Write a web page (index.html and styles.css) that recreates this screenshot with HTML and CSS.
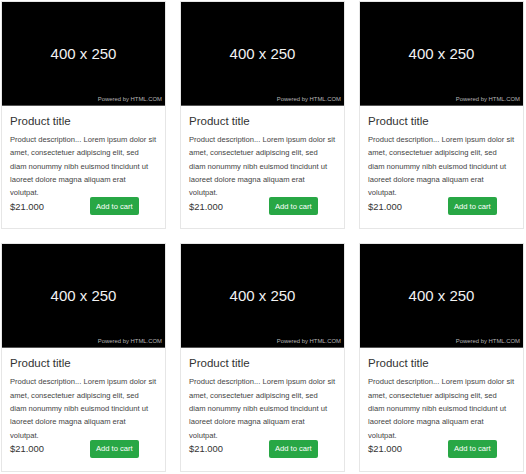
FILE: index.html
```html
<!DOCTYPE html>
<html>
<head>
<meta charset="utf-8">
<link rel="stylesheet" href="styles.css">
</head>
<body>
<div class="grid">
  <div class="card">
    <div class="thumb"><span class="size">400 x 250</span><span class="powered">Powered by HTML.COM</span></div>
    <div class="body">
      <h2 class="title">Product title</h2>
      <p class="desc">Product description... Lorem ipsum dolor sit<br>amet, consectetuer adipiscing elit, sed<br>diam nonummy nibh euismod tincidunt ut<br>laoreet dolore magna aliquam erat<br>volutpat.</p>
      <div class="foot"><span class="price">$21.000</span><button class="btn">Add to cart</button></div>
    </div>
  </div>
  <div class="card">
    <div class="thumb"><span class="size">400 x 250</span><span class="powered">Powered by HTML.COM</span></div>
    <div class="body">
      <h2 class="title">Product title</h2>
      <p class="desc">Product description... Lorem ipsum dolor sit<br>amet, consectetuer adipiscing elit, sed<br>diam nonummy nibh euismod tincidunt ut<br>laoreet dolore magna aliquam erat<br>volutpat.</p>
      <div class="foot"><span class="price">$21.000</span><button class="btn">Add to cart</button></div>
    </div>
  </div>
  <div class="card">
    <div class="thumb"><span class="size">400 x 250</span><span class="powered">Powered by HTML.COM</span></div>
    <div class="body">
      <h2 class="title">Product title</h2>
      <p class="desc">Product description... Lorem ipsum dolor sit<br>amet, consectetuer adipiscing elit, sed<br>diam nonummy nibh euismod tincidunt ut<br>laoreet dolore magna aliquam erat<br>volutpat.</p>
      <div class="foot"><span class="price">$21.000</span><button class="btn">Add to cart</button></div>
    </div>
  </div>
  <div class="card">
    <div class="thumb"><span class="size">400 x 250</span><span class="powered">Powered by HTML.COM</span></div>
    <div class="body">
      <h2 class="title">Product title</h2>
      <p class="desc">Product description... Lorem ipsum dolor sit<br>amet, consectetuer adipiscing elit, sed<br>diam nonummy nibh euismod tincidunt ut<br>laoreet dolore magna aliquam erat<br>volutpat.</p>
      <div class="foot"><span class="price">$21.000</span><button class="btn">Add to cart</button></div>
    </div>
  </div>
  <div class="card">
    <div class="thumb"><span class="size">400 x 250</span><span class="powered">Powered by HTML.COM</span></div>
    <div class="body">
      <h2 class="title">Product title</h2>
      <p class="desc">Product description... Lorem ipsum dolor sit<br>amet, consectetuer adipiscing elit, sed<br>diam nonummy nibh euismod tincidunt ut<br>laoreet dolore magna aliquam erat<br>volutpat.</p>
      <div class="foot"><span class="price">$21.000</span><button class="btn">Add to cart</button></div>
    </div>
  </div>
  <div class="card">
    <div class="thumb"><span class="size">400 x 250</span><span class="powered">Powered by HTML.COM</span></div>
    <div class="body">
      <h2 class="title">Product title</h2>
      <p class="desc">Product description... Lorem ipsum dolor sit<br>amet, consectetuer adipiscing elit, sed<br>diam nonummy nibh euismod tincidunt ut<br>laoreet dolore magna aliquam erat<br>volutpat.</p>
      <div class="foot"><span class="price">$21.000</span><button class="btn">Add to cart</button></div>
    </div>
  </div>
</div>
</body>
</html>
```
FILE: styles.css
```css
html, body {
  margin: 0;
  padding: 0;
  background: #fff;
  font-family: "Liberation Sans", Arial, sans-serif;
}
.grid {
  display: grid;
  grid-template-columns: repeat(3, 1fr);
  column-gap: 14px;
  row-gap: 14px;
  padding: 1px 2px 0 1px;
}
.card {
  border: 1px solid #e6e6e6;
  background: #fff;
  box-sizing: border-box;
}
.thumb {
  position: relative;
  height: 103px;
  background: #000;
  display: flex;
  align-items: center;
  justify-content: center;
  border-bottom: 1px solid #555;
}
.size {
  color: #f2f2f2;
  font-size: 15px;
}
.powered {
  position: absolute;
  right: 3px;
  bottom: 3px;
  font-size: 5.9px;
  color: #b5b5b5;
}
.body {
  padding: 8px 4px 13px 8px;
}
.title {
  margin: 0;
  font-size: 11.5px;
  font-weight: normal;
  line-height: 15px;
  color: #333;
}
.desc {
  margin: 4px 0 0;
  font-size: 7.6px;
  line-height: 13.3px;
  color: #444;
  white-space: nowrap;
}
.foot {
  display: grid;
  grid-template-columns: 80px auto;
  align-items: center;
  margin-top: -2px;
}
.price {
  font-size: 9.4px;
  color: #333;
}
.btn {
  justify-self: start;
  height: 18px;
  padding: 0 6px;
  border: none;
  border-radius: 2px;
  background: #28a745;
  color: #fff;
  font-family: "Liberation Sans", Arial, sans-serif;
  font-size: 7.6px;
}
```
